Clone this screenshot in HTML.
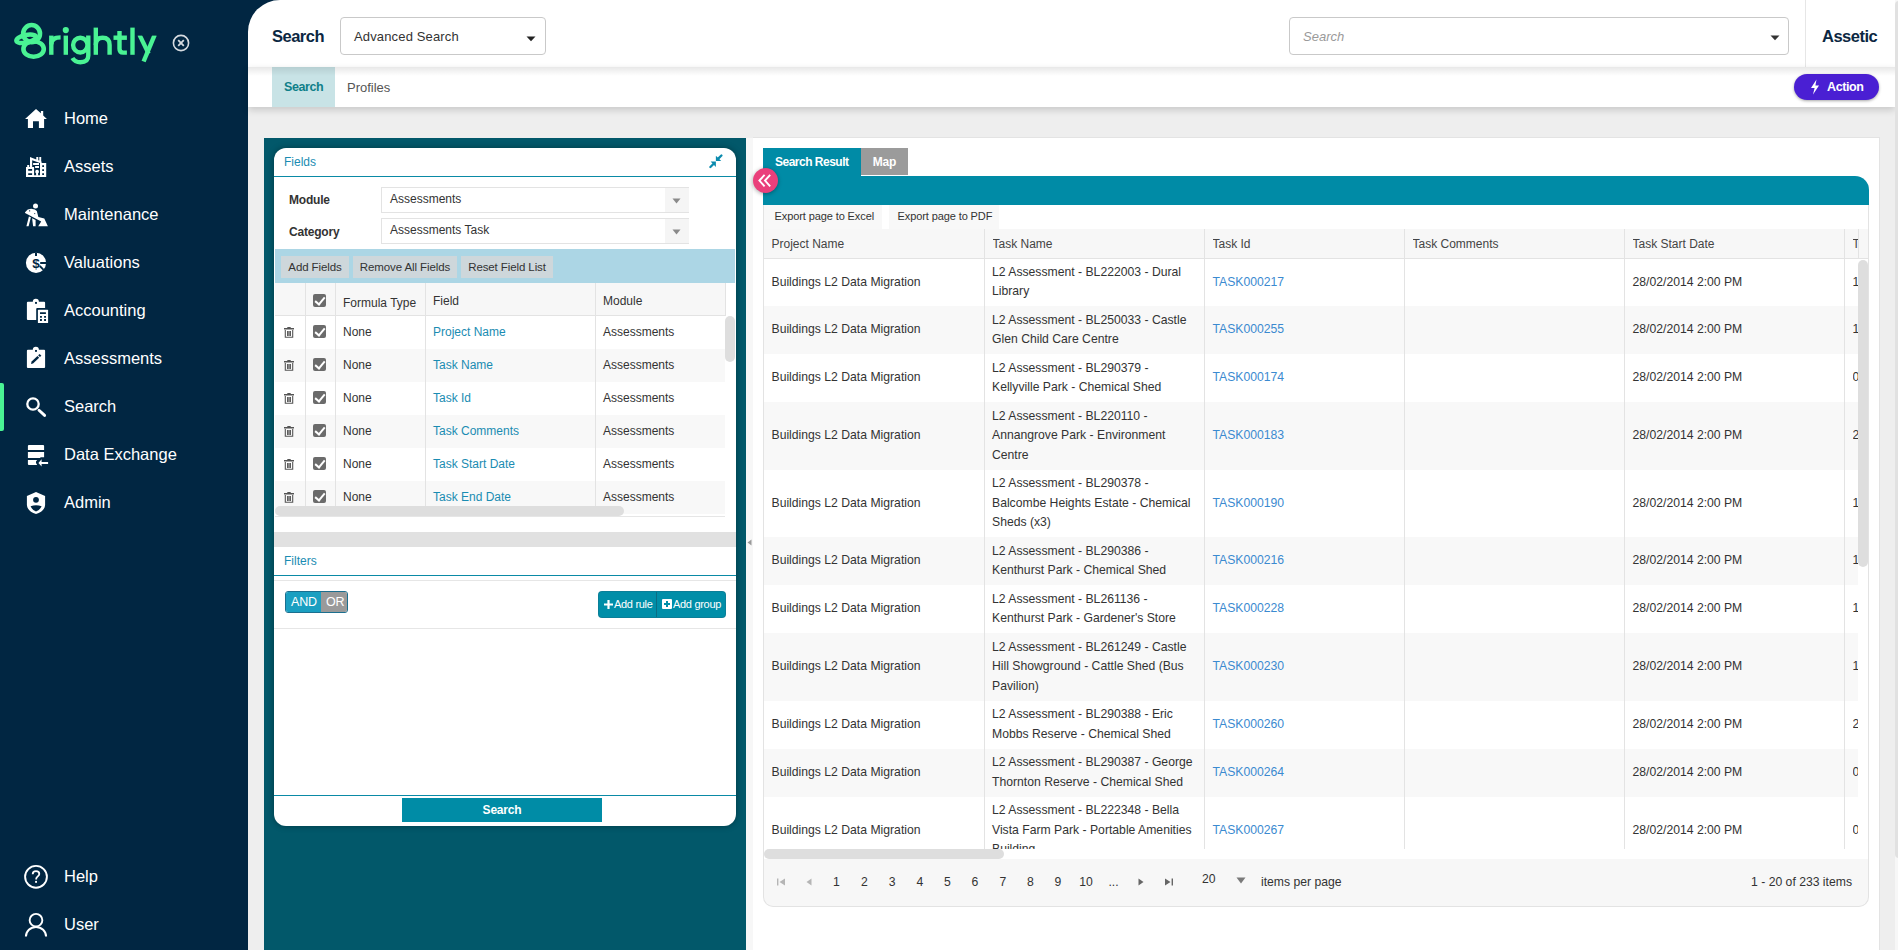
<!DOCTYPE html>
<html><head><meta charset="utf-8">
<style>
*{box-sizing:border-box;}
html,body{margin:0;padding:0;}
body{width:1898px;height:950px;overflow:hidden;position:relative;background:#eeeeee;font-family:"Liberation Sans",sans-serif;color:#333;}
.abs{position:absolute;}
#sb{left:0;top:0;width:248px;height:950px;background:#012642;}
.nav{position:absolute;left:0;width:248px;height:48px;color:#fff;font-size:16.5px;}
.nav span{position:absolute;left:64px;top:15.2px;line-height:18px;}
.nav svg{position:absolute;}
#hdr{left:248px;top:0;width:1647px;height:67px;background:#fff;border-top-left-radius:32px;}
#sub{left:248px;top:67px;width:1647px;height:40px;background:#fff;box-shadow:0 3px 7px rgba(0,0,0,.16);}
#hdrshadow{left:248px;top:67px;width:1647px;height:6px;background:linear-gradient(rgba(0,0,0,.10),rgba(0,0,0,0));z-index:2;}
#vscroll{overflow:hidden;left:1895px;top:0;width:3px;height:950px;background:#f7f7f7;}
#lp{left:264px;top:138px;width:482px;height:812px;background:#02586a;}
#card{left:274px;top:148px;width:462px;height:678px;background:#fff;border-radius:12px;box-shadow:0 0 6px rgba(0,0,0,.35);overflow:hidden;}
#split{left:746px;top:138px;width:7px;height:812px;background:#f7f7f7;}
#rc{left:753px;top:137px;width:1127px;height:830px;background:#fff;border:1px solid #e3e3e3;border-left:none;}
.lbl{font-size:12px;line-height:14px;font-weight:bold;color:#333;letter-spacing:-0.2px}
.sel{width:308px;height:26px;border:1px solid #e3e3e3;background:#fff}
.selt{left:8px;top:4px;font-size:12px;line-height:14px;color:#333}
.selb{left:283px;top:0;width:24px;height:24px;background:#f5f5f5}
.tbtn{height:22px;background:#ced7db;font-size:11.5px;line-height:22px;text-align:center;color:#333;letter-spacing:-0.1px}
.gl{width:1px;background:#e3e3e3}
.cb{width:13px;height:13px;background:#6b6b6b;border-radius:2px}
.cb:after{content:"";position:absolute;left:4.2px;top:0.8px;width:4px;height:8px;border:solid #fff;border-width:0 2.3px 2.3px 0;transform:rotate(40deg)}
.gt{font-size:12px;line-height:14px;color:#333;white-space:nowrap}
.gr{left:0;width:1095px}
.c{position:absolute;top:0;bottom:0;display:flex;align-items:center;font-size:12.2px;line-height:19.5px;color:#333;white-space:nowrap}
.lnk{color:#3b8ad0}
</style></head>
<body>
<div id="sb" class="abs">
<svg class="abs" style="left:0;top:0" width="248" height="80" viewBox="0 0 248 80">
 <g fill="none" stroke="#4af394" stroke-width="4.6">
  <ellipse cx="31.6" cy="33.6" rx="8.4" ry="8.6"/>
  <ellipse cx="33.6" cy="49" rx="10.2" ry="7.8"/>
  <ellipse cx="26.2" cy="38.8" rx="10" ry="3.8" transform="rotate(-12 26.2 38.8)"/>
 </g>
 <g fill="none" stroke="#4af394" stroke-width="4.4">
  <path d="M51.3 54.8V35.6"/><path d="M51.3 44.5Q51.3 37.4 60.6 37.4"/>
  <path d="M65.8 54.8V35.6"/>
  <ellipse cx="80.3" cy="45.1" rx="7.2" ry="7.4"/>
  <path d="M88.3 35.6V55.5Q88.3 62.2 80.4 62.2Q74.8 62.2 72.4 58"/>
  <path d="M95.8 27.6V54.8"/><path d="M95.8 45Q95.8 37.7 102.6 37.7Q109.6 37.7 109.6 45V54.8"/>
  <path d="M119.5 31V48.8Q119.5 52.6 123.2 52.6H126.9"/><path d="M113.5 37.7H126.9"/>
  <path d="M132.5 27.6V54.8"/>
  <path d="M139.4 34.6L148.6 53.6"/><path d="M154.8 34.6L143.6 61.5"/>
 </g>
 <circle cx="65.8" cy="30.1" r="3.1" fill="#4af394"/><rect x="135.5" y="30" width="24" height="5.6" fill="#012642"/>
 <g fill="none" stroke="#d6dbe0" stroke-width="1.6">
  <circle cx="181" cy="43" r="7.6"/>
  <path d="M178.2 40.2l5.6 5.6M183.8 40.2l-5.6 5.6" stroke-width="1.8"/>
 </g>
</svg>
<div class="nav" style="top:94px"><svg width="32" height="32" viewBox="0 0 32 32" style="left:20px;top:8px"><path fill="#fff" d="M16 6.9 20.9 11.3V8.9h2.3v4.5l3.7 3.5h-2.8v9.2h-5.2v-6.9H13v6.9H7.9v-9.2H5.05z"/></svg><span>Home</span></div>
<div class="nav" style="top:142px"><svg width="32" height="32" viewBox="0 0 32 32" style="left:20px;top:8px"><g transform="translate(6 7)"><path fill="#fff" d="M0 20V10.1h1.2V7.9h2V10.1H4V0l6.3 2.4V0h2v3.2l1 .3V0h1.9v4.4l.4.1v1.6h4.6V20z"/><path fill="#012642" d="M6.2 3.2 14 6v12.2H8.1v-8.1H6.2zM2.2 12.1h3.9v1.7H2.2zm0 4.1h3.9V18H2.2zm14-7.9H18V10h-1.8zm0 4H18V14h-1.8zm0 3.9H18V18h-1.8z"/><path fill="#fff" d="M7.1 6.1H13v2H7.1zm2 3H13v2H9.1zm2 3.7a1.9 1.9 0 0 1 1 3.5v2.4h-2v-2.4a1.9 1.9 0 0 1 1-3.5z"/></g></svg><span>Assets</span></div>
<div class="nav" style="top:190px"><svg width="32" height="32" viewBox="0 0 32 32" style="left:20px;top:8px"><g fill="#fff"><circle cx="15.5" cy="7.9" r="2.5"/><path d="M5.05 14.3 7.75 11.45 11.1 10.8 14.8 11.5 16.8 13.1 18.35 18.9 24.3 20.6 27.9 28.2H18.2L21.2 23.4 5.05 15.1z"/><path d="M6.4 28.3h2.2l2.3-9-2-.9zM13.1 28.3h2.5v-6.3l-3.5-1.7z"/></g><path d="M9 12.9h1.2M14.3 15.6h.9" stroke="#012642" stroke-width="1"/></svg><span>Maintenance</span></div>
<div class="nav" style="top:238px"><svg width="32" height="32" viewBox="0 0 32 32" style="left:20px;top:8px"><circle cx="16" cy="16.8" r="10.1" fill="#fff"/><path fill="#012642" d="M15 6.5h2v3.4h-2zM20.2 16.1h6.3v1.8h-6.3z"/><path d="M19.8 20l3.8 3.9" stroke="#012642" stroke-width="1.8"/><text x="16" y="22.3" text-anchor="middle" font-family="Liberation Sans" font-weight="bold" font-size="13.5" fill="#012642">$</text></svg><span>Valuations</span></div>
<div class="nav" style="top:286px"><svg width="32" height="32" viewBox="0 0 32 32" style="left:20px;top:8px"><path fill="#fff" d="M7.9 7.7h4.9a3.05 3.05 0 0 1 6.1 0h5.2q1 0 1 1V14h-7.9q-1 0-1 1v11.1H7.9q-1 0-1-1V8.7q0-1 1-1z"/><rect x="15.05" y="7.95" width="1.9" height="1.9" fill="#012642"/><rect x="17.9" y="15.8" width="10.2" height="13.2" rx=".6" fill="#fff"/><path fill="#012642" d="M20 18.2h5.9v1.7H20zM20 22.1h1.9v1.7H20zm4.1 0H26v1.7h-1.9zM20 25.1h1.9v1.8H20zm4.1 0H26v1.8h-1.9z"/></svg><span>Accounting</span></div>
<div class="nav" style="top:334px"><svg width="32" height="32" viewBox="0 0 32 32" style="left:20px;top:8px"><path fill="#fff" d="M7.9 7.7h4.9a3.05 3.05 0 0 1 6.1 0h5.2q1 0 1 1v16.4q0 1-1 1H7.9q-1 0-1-1V8.7q0-1 1-1z"/><rect x="15.05" y="7.95" width="1.9" height="1.9" fill="#012642"/><path d="M11.9 20.9 18.3 14.9" stroke="#012642" stroke-width="2.5"/><path d="M19 14.2l1.5-1.4" stroke="#012642" stroke-width="2.5"/><path d="M11 21.9l.4-1.7 1.3 1.3z" fill="#012642"/></svg><span>Assessments</span></div>
<div class="nav" style="top:382px"><div class="abs" style="left:0;top:1px;width:4px;height:48px;background:#4af394;border-radius:0 2px 2px 0"></div><svg width="32" height="32" viewBox="0 0 32 32" style="left:20px;top:8px"><circle cx="13" cy="14" r="5.7" fill="none" stroke="#fff" stroke-width="2.3"/><path d="M19 20.2l5.6 5.2" stroke="#fff" stroke-width="2.9" stroke-linecap="round"/></svg><span>Search</span></div>
<div class="nav" style="top:430px"><svg width="32" height="32" viewBox="0 0 32 32" style="left:20px;top:8px"><path fill="#fff" d="M8.9 6.9h14.2q1 0 1 1V12H7.9V7.9q0-1 1-1zM7.9 14h16.2v5.3h-3.4l-.7.6H7.9zM7.9 21.9h9.3l-1.2 1.5v1.6l1.2 1.9H8.9q-1 0-1-1z"/><path fill="#fff" d="M18.4 24.9l3.2-3.7v2.7h6.5v2h-6.5v2.7z"/></svg><span>Data Exchange</span></div>
<div class="nav" style="top:478px"><svg width="32" height="32" viewBox="0 0 32 32" style="left:20px;top:8px"><path fill="#fff" d="M16 6.1 25.1 9.9v8.6c0 4.5-3.8 8.2-9.1 9.5-5.3-1.3-9.1-5-9.1-9.5V9.9z"/><circle cx="16" cy="13.8" r="2.9" fill="#012642"/><path fill="#012642" d="M10.6 20.2q5.4-2 11 0-2 4.3-5.6 5.4-3.5-1.1-5.4-5.4z"/></svg><span>Admin</span></div>
<div class="nav" style="top:852px"><svg width="32" height="32" viewBox="0 0 32 32" style="left:20px;top:8px"><circle cx="16" cy="16.8" r="10.9" fill="none" stroke="#fff" stroke-width="1.9"/><path d="M12.7 14.3c0-2 1.5-3.1 3.3-3.1s3.3 1.1 3.3 2.8c0 2.4-3.1 2.3-3.1 4.8v.6" fill="none" stroke="#fff" stroke-width="1.8"/><rect x="15.1" y="20.9" width="1.9" height="1.9" fill="#fff"/></svg><span>Help</span></div>
<div class="nav" style="top:900px"><svg width="32" height="32" viewBox="0 0 32 32" style="left:20px;top:8px"><circle cx="16" cy="12.2" r="6.35" fill="none" stroke="#fff" stroke-width="1.9"/><path d="M5.9 28.6a10.1 9.6 0 0 1 20.2 0" fill="none" stroke="#fff" stroke-width="2"/></svg><span>User</span></div>
</div>

<div class="abs" style="left:248px;top:0;width:40px;height:40px;background:#012642"></div>
<div id="hdr" class="abs">
 <div class="abs" style="left:24px;top:27px;font-size:16.5px;font-weight:bold;color:#0b2742;line-height:19px;letter-spacing:-0.5px">Search</div>
 <div class="abs" style="left:92px;top:17px;width:206px;height:38px;border:1px solid #c9c9c9;border-radius:4px;">
   <div class="abs" style="left:13px;top:11px;font-size:13px;line-height:15px;color:#333;letter-spacing:0.15px">Advanced Search</div>
   <svg class="abs" style="left:185px;top:18px" width="10" height="6" viewBox="0 0 10 6"><path d="M0.5 0.5h9L5 5.2z" fill="#222"/></svg>
 </div>
 <div class="abs" style="left:1041px;top:17px;width:500px;height:38px;border:1px solid #c9c9c9;border-radius:4px;">
   <div class="abs" style="left:13px;top:11px;font-size:13px;line-height:15px;color:#9a9a9a;font-style:italic">Search</div>
   <svg class="abs" style="left:480px;top:17px" width="10" height="6" viewBox="0 0 10 6"><path d="M0.5 0.5h9L5 5.2z" fill="#333"/></svg>
 </div>
 <div class="abs" style="left:1557px;top:0;width:1px;height:67px;background:#e6e6e6"></div>
 <div class="abs" style="left:1574px;top:27px;font-size:16.5px;font-weight:bold;color:#0b2742;line-height:19px;letter-spacing:-0.5px">Assetic</div>
</div>
<div id="sub" class="abs">
 <div class="abs" style="left:0;top:0;width:1647px;height:9px;background:linear-gradient(rgba(0,0,0,.09),rgba(0,0,0,0));z-index:3"></div>
 <div class="abs" style="left:24px;top:0;width:63px;height:40px;background:#c8e3e6"></div>
 <div class="abs" style="left:36px;top:13px;font-size:12.5px;font-weight:bold;color:#0f7f89;line-height:15px;letter-spacing:-0.4px">Search</div>
 <div class="abs" style="left:99px;top:13px;font-size:13px;color:#555;line-height:15px">Profiles</div>
 <div class="abs" style="left:1546px;top:7px;width:85px;height:26px;border-radius:13px;background:#4a1fd3;box-shadow:0 1px 3px rgba(0,0,0,.35)">
   <svg class="abs" style="left:16px;top:5px" width="10" height="16" viewBox="0 0 10 16"><path d="M6.5 0.5 1 9h3.6L3 15.5 9 6.6H5.4z" fill="#fff"/></svg>
   <div class="abs" style="left:33px;top:6px;font-size:12.5px;font-weight:bold;color:#fff;line-height:15px;letter-spacing:-0.4px">Action</div>
 </div>
</div>
<div id="vscroll" class="abs"><div class="abs" style="left:0;top:1px;width:8px;height:857px;background:#e1e1e1;border-radius:4px"></div></div>
<div id="lp" class="abs"></div>
<div id="card" class="abs">
 <div class="abs" style="left:10px;top:7px;font-size:12px;line-height:14px;color:#1a8cb2">Fields</div>
 <svg class="abs" style="left:435px;top:6px" width="15" height="15" viewBox="0 0 15 15"><g fill="#0b8bae"><path d="M6.9 1.7v5.3h5.3z"/><path d="M6.9 7.6H1.6l5.3 5.3z"/></g><g stroke="#0b8bae" stroke-width="2.3" stroke-linecap="round"><path d="M9 4.9l3.4-3.4M4.7 9.7l-3.3 3.3"/></g></svg>
 <div class="abs" style="left:0;top:28px;width:462px;height:1px;background:#0a8aa6"></div>
 <div class="abs lbl" style="left:15px;top:45px">Module</div>
 <div class="abs sel" style="left:107px;top:39px"><div class="abs selt">Assessments</div><div class="abs selb"></div><svg class="abs" style="left:290px;top:10px" width="9" height="6" viewBox="0 0 9 6"><path d="M0.5 0.5h8L4.5 5.5z" fill="#8a8a8a"/></svg></div>
 <div class="abs lbl" style="left:15px;top:77px">Category</div>
 <div class="abs sel" style="left:107px;top:70px"><div class="abs selt">Assessments Task</div><div class="abs selb"></div><svg class="abs" style="left:290px;top:10px" width="9" height="6" viewBox="0 0 9 6"><path d="M0.5 0.5h8L4.5 5.5z" fill="#8a8a8a"/></svg></div>
 <div class="abs" style="left:1px;top:101px;width:460px;height:34px;background:#acd6e5"></div>
 <div class="abs tbtn" style="left:7px;top:108px;width:68px">Add Fields</div>
 <div class="abs tbtn" style="left:79px;top:108px;width:104px">Remove All Fields</div>
 <div class="abs tbtn" style="left:187px;top:108px;width:92px">Reset Field List</div>
 <!-- grid -->
 <div class="abs" style="left:1px;top:135px;width:450px;height:33px;background:#f7f7f7;border-bottom:1px solid #e3e3e3"></div>
 
 
 
 
 <div class="abs gl" style="left:451px;top:135px;height:33px"></div>
 <div class="abs cb" style="left:39px;top:146px"></div>
 <div class="abs gt" style="left:69px;top:148px">Formula Type</div>
 <div class="abs gt" style="left:159px;top:146px">Field</div>
 <div class="abs gt" style="left:329px;top:146px">Module</div>
 <div class="abs" style="left:1px;top:168px;width:450px;height:33px;background:#fff"></div>
 <div class="abs" style="left:1px;top:201px;width:450px;height:33px;background:#f8f8f8"></div>
 <div class="abs" style="left:1px;top:234px;width:450px;height:33px;background:#fff"></div>
 <div class="abs" style="left:1px;top:267px;width:450px;height:33px;background:#f8f8f8"></div>
 <div class="abs" style="left:1px;top:300px;width:450px;height:33px;background:#fff"></div>
 <div class="abs" style="left:1px;top:333px;width:450px;height:33px;background:#f8f8f8"></div>
 <svg class="abs" style="left:10px;top:179px" width="10" height="11" viewBox="0 0 10 11"><path fill="#555" d="M3.5 0h3l.4 1H10v1.4H0V1h3.1z"/><path fill="none" stroke="#555" stroke-width="1.1" d="M1.3 3v7.3h7.4V3M3.6 4v5M5 4v5M6.4 4v5"/></svg>
 <div class="abs cb" style="left:39px;top:177px"></div>
 <div class="abs gt" style="left:69px;top:177px">None</div>
 <div class="abs gt" style="left:159px;top:177px;color:#1a8cb2">Project Name</div>
 <div class="abs gt" style="left:329px;top:177px">Assessments</div>
 <svg class="abs" style="left:10px;top:212px" width="10" height="11" viewBox="0 0 10 11"><path fill="#555" d="M3.5 0h3l.4 1H10v1.4H0V1h3.1z"/><path fill="none" stroke="#555" stroke-width="1.1" d="M1.3 3v7.3h7.4V3M3.6 4v5M5 4v5M6.4 4v5"/></svg>
 <div class="abs cb" style="left:39px;top:210px"></div>
 <div class="abs gt" style="left:69px;top:210px">None</div>
 <div class="abs gt" style="left:159px;top:210px;color:#1a8cb2">Task Name</div>
 <div class="abs gt" style="left:329px;top:210px">Assessments</div>
 <svg class="abs" style="left:10px;top:245px" width="10" height="11" viewBox="0 0 10 11"><path fill="#555" d="M3.5 0h3l.4 1H10v1.4H0V1h3.1z"/><path fill="none" stroke="#555" stroke-width="1.1" d="M1.3 3v7.3h7.4V3M3.6 4v5M5 4v5M6.4 4v5"/></svg>
 <div class="abs cb" style="left:39px;top:243px"></div>
 <div class="abs gt" style="left:69px;top:243px">None</div>
 <div class="abs gt" style="left:159px;top:243px;color:#1a8cb2">Task Id</div>
 <div class="abs gt" style="left:329px;top:243px">Assessments</div>
 <svg class="abs" style="left:10px;top:278px" width="10" height="11" viewBox="0 0 10 11"><path fill="#555" d="M3.5 0h3l.4 1H10v1.4H0V1h3.1z"/><path fill="none" stroke="#555" stroke-width="1.1" d="M1.3 3v7.3h7.4V3M3.6 4v5M5 4v5M6.4 4v5"/></svg>
 <div class="abs cb" style="left:39px;top:276px"></div>
 <div class="abs gt" style="left:69px;top:276px">None</div>
 <div class="abs gt" style="left:159px;top:276px;color:#1a8cb2">Task Comments</div>
 <div class="abs gt" style="left:329px;top:276px">Assessments</div>
 <svg class="abs" style="left:10px;top:311px" width="10" height="11" viewBox="0 0 10 11"><path fill="#555" d="M3.5 0h3l.4 1H10v1.4H0V1h3.1z"/><path fill="none" stroke="#555" stroke-width="1.1" d="M1.3 3v7.3h7.4V3M3.6 4v5M5 4v5M6.4 4v5"/></svg>
 <div class="abs cb" style="left:39px;top:309px"></div>
 <div class="abs gt" style="left:69px;top:309px">None</div>
 <div class="abs gt" style="left:159px;top:309px;color:#1a8cb2">Task Start Date</div>
 <div class="abs gt" style="left:329px;top:309px">Assessments</div>
 <svg class="abs" style="left:10px;top:344px" width="10" height="11" viewBox="0 0 10 11"><path fill="#555" d="M3.5 0h3l.4 1H10v1.4H0V1h3.1z"/><path fill="none" stroke="#555" stroke-width="1.1" d="M1.3 3v7.3h7.4V3M3.6 4v5M5 4v5M6.4 4v5"/></svg>
 <div class="abs cb" style="left:39px;top:342px"></div>
 <div class="abs gt" style="left:69px;top:342px">None</div>
 <div class="abs gt" style="left:159px;top:342px;color:#1a8cb2">Task End Date</div>
 <div class="abs gt" style="left:329px;top:342px">Assessments</div>
 <div class="abs gl" style="left:31px;top:135px;height:233px"></div><div class="abs gl" style="left:61px;top:135px;height:233px"></div><div class="abs gl" style="left:151px;top:135px;height:233px"></div><div class="abs gl" style="left:321px;top:135px;height:233px"></div><div class="abs" style="left:1px;top:358px;width:349px;height:10px;background:#dedede;border-radius:5px"></div>
 <div class="abs" style="left:451px;top:168px;width:10px;height:46px;background:#dedede;border-radius:5px"></div>
 <div class="abs" style="left:1px;top:368px;width:450px;height:1px;background:#e6e6e6"></div>
 <div class="abs" style="left:0;top:384px;width:462px;height:15px;background:#e1e1e1"></div>
 <div class="abs" style="left:10px;top:406px;font-size:12px;line-height:14px;color:#1a8cb2">Filters</div>
 <div class="abs" style="left:0;top:427px;width:462px;height:1px;background:#0a8aa6"></div>
 <div class="abs" style="left:0;top:432px;width:462px;height:1px;background:#e6e6e6"></div>
 <div class="abs" style="left:11px;top:443px;width:63px;height:22px;border:1px solid #1b6f8f;border-radius:3px;overflow:hidden">
   <div class="abs" style="left:0;top:0;width:35px;height:20px;background:#1a9fc1"></div>
   <div class="abs" style="left:35px;top:0;width:27px;height:20px;background:#9a9a9a"></div>
   <div class="abs" style="left:5px;top:3px;font-size:12.5px;line-height:14px;color:#fff;letter-spacing:-0.2px">AND</div>
   <div class="abs" style="left:40px;top:3px;font-size:12.5px;line-height:14px;color:#fff;letter-spacing:-0.2px">OR</div>
 </div>
 <div class="abs" style="left:325px;top:444px;width:126px;height:25px;background:#008ea8;border-radius:3px;box-shadow:0 0 0 1px #0a7f98"></div>
 <div class="abs" style="left:382px;top:444px;width:1px;height:25px;background:#0a6d84"></div>
 <svg class="abs" style="left:330px;top:452px" width="9" height="9" viewBox="0 0 9 9"><path d="M3.4 0h2.2v3.4H9v2.2H5.6V9H3.4V5.6H0V3.4h3.4z" fill="#fff"/></svg>
 <div class="abs" style="left:340px;top:450px;font-size:11px;line-height:13px;color:#fff;letter-spacing:-0.3px">Add rule</div>
 <svg class="abs" style="left:388px;top:451px" width="10" height="10" viewBox="0 0 10 10"><path fill="#fff" fill-rule="evenodd" d="M1 0h8a1 1 0 0 1 1 1v8a1 1 0 0 1-1 1H1a1 1 0 0 1-1-1V1a1 1 0 0 1 1-1zm3 2v2H2v2h2v2h2V6h2V4H6V2z"/></svg>
 <div class="abs" style="left:399px;top:450px;font-size:11px;line-height:13px;color:#fff;letter-spacing:-0.3px">Add group</div>
 <div class="abs" style="left:0;top:480px;width:462px;height:1px;background:#e6e6e6"></div>
 <div class="abs" style="left:0;top:647px;width:462px;height:1px;background:#0a8aa6"></div>
 <div class="abs" style="left:128px;top:650px;width:200px;height:24px;background:#008ca6"></div>
 <div class="abs" style="left:128px;top:655px;width:200px;text-align:center;font-size:12px;line-height:14px;color:#fff;font-weight:bold;letter-spacing:-0.2px">Search</div>
</div>

<div id="split" class="abs"><svg class="abs" style="left:1px;top:401px" width="5" height="7" viewBox="0 0 5 7"><path d="M4.5 0.5v6L0.5 3.5z" fill="#9a9a9a"/></svg></div>
<div id="rc" class="abs">
<div class="abs" style="left:10px;top:10px;width:98px;height:28px;background:#008ba6"></div>
<div class="abs" style="left:22px;top:10px;width:98px;height:28px;color:#fff;font-weight:bold;font-size:12px;line-height:28px;letter-spacing:-0.5px">Search Result</div>
<div class="abs" style="left:108px;top:10px;width:47px;height:27px;background:#9b9b9b"></div>
<div class="abs" style="left:108px;top:10px;width:47px;height:27px;color:#fff;font-weight:bold;font-size:12px;line-height:28.5px;text-align:center;letter-spacing:-0.2px">Map</div>
<div class="abs" style="left:10px;top:38px;width:1106px;height:29px;background:#008ba6;border-top-right-radius:14px"></div>
<div class="abs" style="left:10px;top:67px;width:1106px;height:24px;background:#fff;border-left:1px solid #e3e3e3;border-right:1px solid #e3e3e3"></div>
<div class="abs" style="left:11px;top:67px;width:118px;height:24px;background:#f8f8f8;font-size:11px;line-height:22px;padding-left:10.5px;color:#333;letter-spacing:-0.1px">Export page to Excel</div>
<div class="abs" style="left:136px;top:67px;width:110px;height:24px;background:#f8f8f8;font-size:11px;line-height:22px;padding-left:8.5px;color:#333;letter-spacing:-0.1px">Export page to PDF</div>
<div class="abs" style="left:10px;top:91px;width:1106px;height:30px;background:#f7f7f7;border:1px solid #e3e3e3;border-top:none"></div><div class="abs" style="left:231px;top:91px;width:1px;height:30px;background:#e3e3e3"></div><div class="abs" style="left:451px;top:91px;width:1px;height:30px;background:#e3e3e3"></div><div class="abs" style="left:651px;top:91px;width:1px;height:30px;background:#e3e3e3"></div><div class="abs" style="left:871px;top:91px;width:1px;height:30px;background:#e3e3e3"></div><div class="abs" style="left:1091px;top:91px;width:1px;height:30px;background:#e3e3e3"></div>
<div class="abs" style="left:18.5px;top:91px;width:200px;height:29px;font-size:12px;line-height:30px;color:#444;white-space:nowrap;overflow:hidden">Project Name</div>
<div class="abs" style="left:239.5px;top:91px;width:200px;height:29px;font-size:12px;line-height:30px;color:#444;white-space:nowrap;overflow:hidden">Task Name</div>
<div class="abs" style="left:459.5px;top:91px;width:200px;height:29px;font-size:12px;line-height:30px;color:#444;white-space:nowrap;overflow:hidden">Task Id</div>
<div class="abs" style="left:659.5px;top:91px;width:200px;height:29px;font-size:12px;line-height:30px;color:#444;white-space:nowrap;overflow:hidden">Task Comments</div>
<div class="abs" style="left:879.5px;top:91px;width:200px;height:29px;font-size:12px;line-height:30px;color:#444;white-space:nowrap;overflow:hidden">Task Start Date</div>
<div class="abs" style="left:1099.5px;top:91px;width:200px;height:29px;font-size:12px;line-height:30px;color:#444;white-space:nowrap;overflow:hidden;width:6px">T</div>
<div class="abs" style="left:10px;top:120.5px;width:1106px;height:590.5px;overflow:hidden;border-left:1px solid #e3e3e3;border-right:1px solid #e3e3e3"><div class="abs gr" style="top:0.0px;height:47.5px;background:#fff"><div class="c" style="left:7.5px;width:205px">Buildings L2 Data Migration</div><div class="c" style="left:228px;width:205px">L2 Assessment - BL222003 - Dural<br>Library</div><div class="c lnk" style="left:448.5px;width:190px">TASK000217</div><div class="c" style="left:868.5px;width:190px">28/02/2014 2:00 PM</div><div class="c" style="left:1088.5px;width:10px;overflow:hidden">1</div></div><div class="abs gr" style="top:47.5px;height:48.0px;background:#f8f8f8"><div class="c" style="left:7.5px;width:205px">Buildings L2 Data Migration</div><div class="c" style="left:228px;width:205px">L2 Assessment - BL250033 - Castle<br>Glen Child Care Centre</div><div class="c lnk" style="left:448.5px;width:190px">TASK000255</div><div class="c" style="left:868.5px;width:190px">28/02/2014 2:00 PM</div><div class="c" style="left:1088.5px;width:10px;overflow:hidden">1</div></div><div class="abs gr" style="top:95.5px;height:48.0px;background:#fff"><div class="c" style="left:7.5px;width:205px">Buildings L2 Data Migration</div><div class="c" style="left:228px;width:205px">L2 Assessment - BL290379 -<br>Kellyville Park - Chemical Shed</div><div class="c lnk" style="left:448.5px;width:190px">TASK000174</div><div class="c" style="left:868.5px;width:190px">28/02/2014 2:00 PM</div><div class="c" style="left:1088.5px;width:10px;overflow:hidden">0</div></div><div class="abs gr" style="top:143.5px;height:67.5px;background:#f8f8f8"><div class="c" style="left:7.5px;width:205px">Buildings L2 Data Migration</div><div class="c" style="left:228px;width:205px">L2 Assessment - BL220110 -<br>Annangrove Park - Environment<br>Centre</div><div class="c lnk" style="left:448.5px;width:190px">TASK000183</div><div class="c" style="left:868.5px;width:190px">28/02/2014 2:00 PM</div><div class="c" style="left:1088.5px;width:10px;overflow:hidden">2</div></div><div class="abs gr" style="top:211.0px;height:67.5px;background:#fff"><div class="c" style="left:7.5px;width:205px">Buildings L2 Data Migration</div><div class="c" style="left:228px;width:205px">L2 Assessment - BL290378 -<br>Balcombe Heights Estate - Chemical<br>Sheds (x3)</div><div class="c lnk" style="left:448.5px;width:190px">TASK000190</div><div class="c" style="left:868.5px;width:190px">28/02/2014 2:00 PM</div><div class="c" style="left:1088.5px;width:10px;overflow:hidden">1</div></div><div class="abs gr" style="top:278.5px;height:48.0px;background:#f8f8f8"><div class="c" style="left:7.5px;width:205px">Buildings L2 Data Migration</div><div class="c" style="left:228px;width:205px">L2 Assessment - BL290386 -<br>Kenthurst Park - Chemical Shed</div><div class="c lnk" style="left:448.5px;width:190px">TASK000216</div><div class="c" style="left:868.5px;width:190px">28/02/2014 2:00 PM</div><div class="c" style="left:1088.5px;width:10px;overflow:hidden">1</div></div><div class="abs gr" style="top:326.5px;height:48.0px;background:#fff"><div class="c" style="left:7.5px;width:205px">Buildings L2 Data Migration</div><div class="c" style="left:228px;width:205px">L2 Assessment - BL261136 -<br>Kenthurst Park - Gardener's Store</div><div class="c lnk" style="left:448.5px;width:190px">TASK000228</div><div class="c" style="left:868.5px;width:190px">28/02/2014 2:00 PM</div><div class="c" style="left:1088.5px;width:10px;overflow:hidden">1</div></div><div class="abs gr" style="top:374.5px;height:67.5px;background:#f8f8f8"><div class="c" style="left:7.5px;width:205px">Buildings L2 Data Migration</div><div class="c" style="left:228px;width:205px">L2 Assessment - BL261249 - Castle<br>Hill Showground - Cattle Shed (Bus<br>Pavilion)</div><div class="c lnk" style="left:448.5px;width:190px">TASK000230</div><div class="c" style="left:868.5px;width:190px">28/02/2014 2:00 PM</div><div class="c" style="left:1088.5px;width:10px;overflow:hidden">1</div></div><div class="abs gr" style="top:442.0px;height:48.0px;background:#fff"><div class="c" style="left:7.5px;width:205px">Buildings L2 Data Migration</div><div class="c" style="left:228px;width:205px">L2 Assessment - BL290388 - Eric<br>Mobbs Reserve - Chemical Shed</div><div class="c lnk" style="left:448.5px;width:190px">TASK000260</div><div class="c" style="left:868.5px;width:190px">28/02/2014 2:00 PM</div><div class="c" style="left:1088.5px;width:10px;overflow:hidden">2</div></div><div class="abs gr" style="top:490.0px;height:48.0px;background:#f8f8f8"><div class="c" style="left:7.5px;width:205px">Buildings L2 Data Migration</div><div class="c" style="left:228px;width:205px">L2 Assessment - BL290387 - George<br>Thornton Reserve - Chemical Shed</div><div class="c lnk" style="left:448.5px;width:190px">TASK000264</div><div class="c" style="left:868.5px;width:190px">28/02/2014 2:00 PM</div><div class="c" style="left:1088.5px;width:10px;overflow:hidden">0</div></div><div class="abs gr" style="top:538.0px;height:67.5px;background:#fff"><div class="c" style="left:7.5px;width:205px">Buildings L2 Data Migration</div><div class="c" style="left:228px;width:205px">L2 Assessment - BL222348 - Bella<br>Vista Farm Park - Portable Amenities<br>Building</div><div class="c lnk" style="left:448.5px;width:190px">TASK000267</div><div class="c" style="left:868.5px;width:190px">28/02/2014 2:00 PM</div><div class="c" style="left:1088.5px;width:10px;overflow:hidden">0</div></div><div class="abs" style="left:220px;top:0;width:1px;height:600px;background:#e3e3e3"></div><div class="abs" style="left:440px;top:0;width:1px;height:600px;background:#e3e3e3"></div><div class="abs" style="left:640px;top:0;width:1px;height:600px;background:#e3e3e3"></div><div class="abs" style="left:860px;top:0;width:1px;height:600px;background:#e3e3e3"></div><div class="abs" style="left:1080px;top:0;width:1px;height:600px;background:#e3e3e3"></div><div class="abs" style="left:1094px;top:0;width:10px;height:600px;background:#fff"></div><div class="abs" style="left:1094px;top:1px;width:10px;height:307px;background:#dedede;border-radius:5px"></div></div>
<div class="abs" style="left:1105px;top:91px;width:1px;height:29px;background:#e3e3e3"></div>
<div class="abs" style="left:11px;top:711px;width:240px;height:10px;background:#dedede;border-radius:5px"></div>
<div class="abs" style="left:10px;top:711px;width:1106px;height:10px;border-left:1px solid #e3e3e3;border-right:1px solid #e3e3e3"></div>
<div class="abs" style="left:10px;top:721px;width:1106px;height:48px;background:#f7f7f7;border:1px solid #e3e3e3;border-top:none;border-radius:0 0 10px 10px"></div>
<svg class="abs" style="left:22px;top:738px" width="12" height="12" viewBox="0 0 12 12"><path d="M2 2.5h1.4v7H2z M10 2.5v7L4.5 6z" fill="#b5b5b5"/></svg>
<svg class="abs" style="left:50px;top:738px" width="12" height="12" viewBox="0 0 12 12"><path d="M8.5 2.5v7L3.5 6z" fill="#b5b5b5"/></svg>
<div class="abs" style="left:63.5px;top:735px;width:40px;height:18px;text-align:center;font-size:12.2px;line-height:18px;color:#333">1</div>
<div class="abs" style="left:91.3px;top:735px;width:40px;height:18px;text-align:center;font-size:12.2px;line-height:18px;color:#333">2</div>
<div class="abs" style="left:119.2px;top:735px;width:40px;height:18px;text-align:center;font-size:12.2px;line-height:18px;color:#333">3</div>
<div class="abs" style="left:146.8px;top:735px;width:40px;height:18px;text-align:center;font-size:12.2px;line-height:18px;color:#333">4</div>
<div class="abs" style="left:174.5px;top:735px;width:40px;height:18px;text-align:center;font-size:12.2px;line-height:18px;color:#333">5</div>
<div class="abs" style="left:202px;top:735px;width:40px;height:18px;text-align:center;font-size:12.2px;line-height:18px;color:#333">6</div>
<div class="abs" style="left:229.8px;top:735px;width:40px;height:18px;text-align:center;font-size:12.2px;line-height:18px;color:#333">7</div>
<div class="abs" style="left:257.5px;top:735px;width:40px;height:18px;text-align:center;font-size:12.2px;line-height:18px;color:#333">8</div>
<div class="abs" style="left:285px;top:735px;width:40px;height:18px;text-align:center;font-size:12.2px;line-height:18px;color:#333">9</div>
<div class="abs" style="left:313px;top:735px;width:40px;height:18px;text-align:center;font-size:12.2px;line-height:18px;color:#333">10</div>
<div class="abs" style="left:340.5px;top:735px;width:40px;height:18px;text-align:center;font-size:12.2px;line-height:18px;color:#333">...</div>
<svg class="abs" style="left:382px;top:738px" width="12" height="12" viewBox="0 0 12 12"><path d="M3.5 2.5v7L8.5 6z" fill="#666"/></svg>
<svg class="abs" style="left:410px;top:738px" width="12" height="12" viewBox="0 0 12 12"><path d="M2 2.5v7L7.5 6z M8.6 2.5H10v7H8.6z" fill="#666"/></svg>
<div class="abs" style="left:449px;top:732px;width:30px;height:18px;font-size:12.2px;line-height:18px;color:#333">20</div>
<svg class="abs" style="left:483px;top:739px" width="10" height="7" viewBox="0 0 10 7"><path d="M0.5 0.5h9L5 6.5z" fill="#7a7a7a"/></svg>
<div class="abs" style="left:508px;top:735px;width:120px;height:18px;font-size:12.2px;line-height:18px;color:#333">items per page</div>
<div class="abs" style="left:899px;top:735px;width:200px;height:18px;font-size:12.2px;line-height:18px;color:#333;text-align:right">1 - 20 of 233 items</div>
<div class="abs" style="left:0.2px;top:30.1px;width:25px;height:25px;background:#ea3f7b;border-radius:50%;box-shadow:0 1px 4px rgba(0,0,0,.35)"><svg class="abs" style="left:5px;top:6px" width="14" height="14" viewBox="0 0 14 14"><path d="M6.6 0.8 1.4 6.6l5.2 5.8M12.2 0.8 7 6.6l5.2 5.8" fill="none" stroke="#fff" stroke-width="1.9"/></svg></div>
</div>
</body></html>
